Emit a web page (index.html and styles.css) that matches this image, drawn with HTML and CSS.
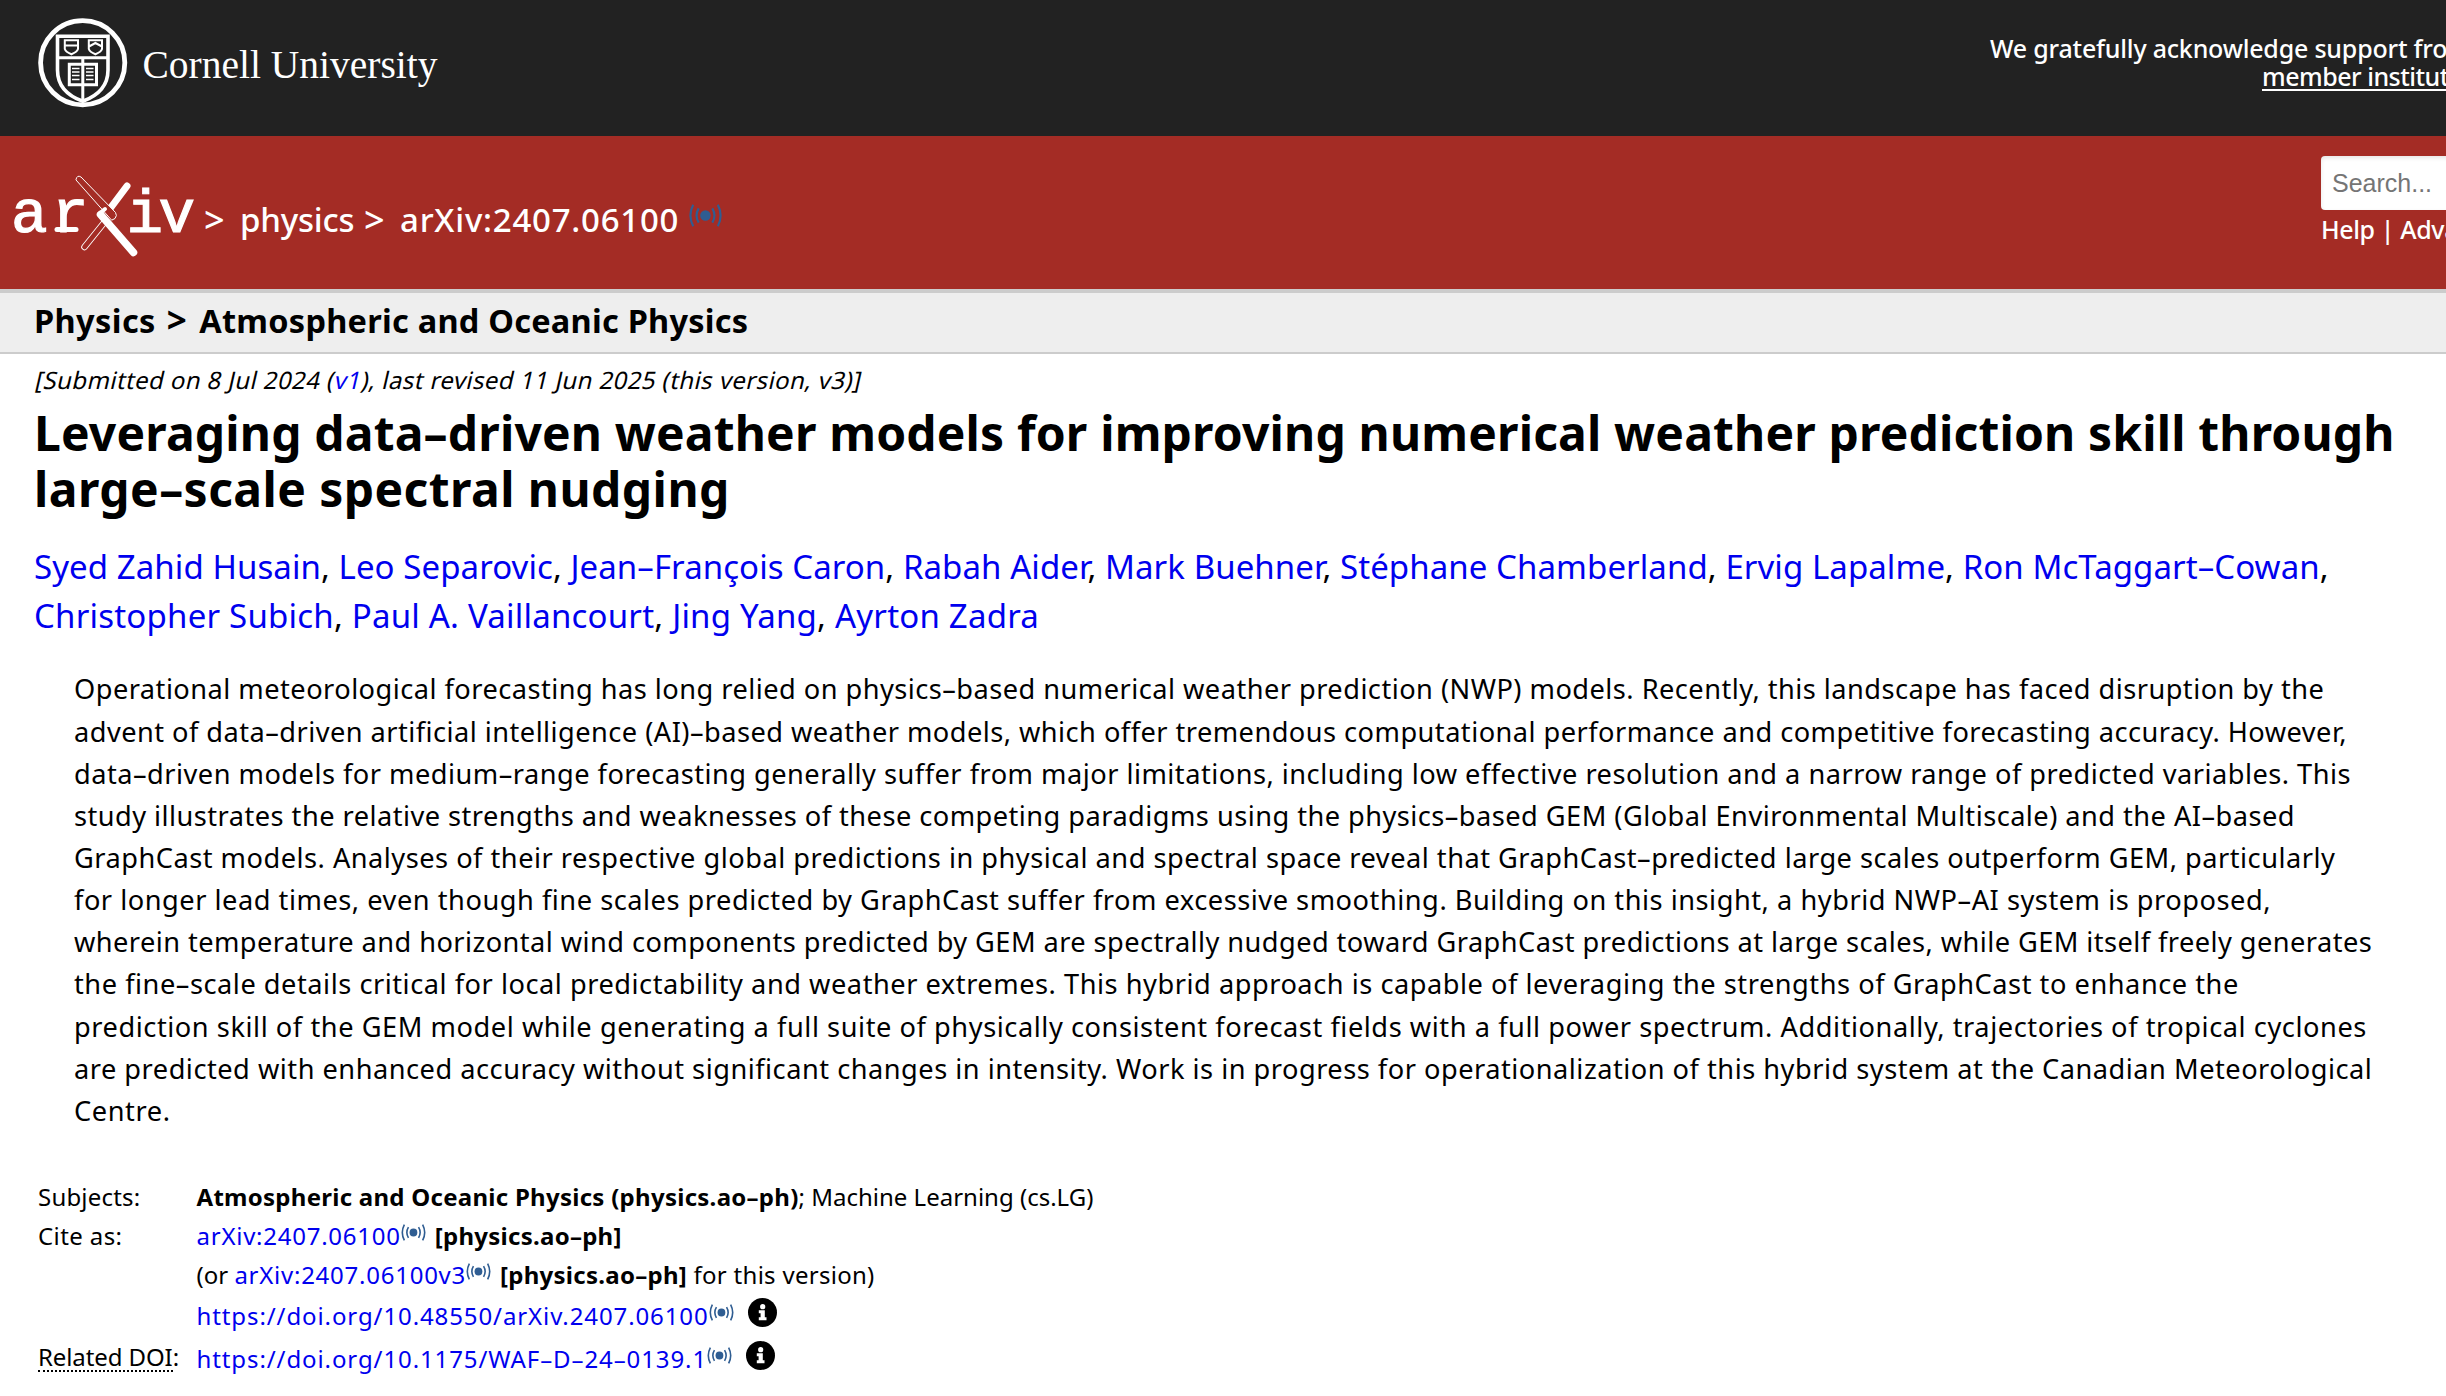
FILE: index.html
```
<!DOCTYPE html>
<html lang="en">
<head>
<meta charset="utf-8">
<title>Leveraging data-driven weather models for improving numerical weather prediction skill</title>
<link rel="stylesheet" href="styles.css">
</head>
<body>
<svg class="defs" width="0" height="0" aria-hidden="true">
  <symbol id="signal" viewBox="0 0 24.5 17">
    <circle cx="12.2" cy="8.5" r="3.9" fill="#2f5d92"/>
    <path d="M7.2 3.2Q4 8.5 7.2 13.8M17.3 3.2Q20.5 8.5 17.3 13.8M3.1 .6Q-1 8.5 3.1 16.4M21.4 .6Q25.5 8.5 21.4 16.4" fill="none" stroke="#2f5d92" stroke-width="1.6"/>
  </symbol>
  <symbol id="info" viewBox="0 0 29 29">
    <circle cx="14.5" cy="14.5" r="14.5"/>
    <circle cx="14.7" cy="8.7" r="2.6" fill="#fff"/>
    <path d="M10.8 12.3h6v7h1.700v3h-7.700v-3h1.800v-4h-1.800z" fill="#fff"/>
  </symbol>
</svg>

<header class="cornell">
  <svg class="cornell-logo" width="410" height="100" viewBox="34 14 410 100">
    <g fill="none" stroke="#fff">
      <circle cx="82.7" cy="62.8" r="42.1" stroke-width="4.8"/>
      <path d="M57.5 36.3H108V70C108 86 97 96 82.800 101.300C68 96 57.500 86 57.500 70Z" stroke-width="3.6"/>
      <path d="M57.5 57.7H108M82.8 58V100" stroke-width="3"/>
      <path d="M69.3 64.3H96.5V84.8H69.3Z" stroke-width="3"/>
      <path d="M72 68.5h7.5M72 72h7.5M72 75.5h7.5M72 79.5h7.5M86 68.5h7.5M86 72h7.5M86 75.5h7.5M86 79.5h7.5" stroke-width="1.5"/>
      <path d="M64.8 40.2H78V49Q77 52 71.4 54.3Q65.8 52 64.8 49ZM64.8 45.5H78M88.8 40.2H102V49Q101 52 95.4 54.3Q89.8 52 88.8 49ZM89 46.5L95.4 43L102 46.5" stroke-width="2"/>
    </g>
    <text class="cornell-name" x="142.5" y="77.5" textLength="295" lengthAdjust="spacingAndGlyphs">Cornell University</text>
  </svg>
  <div class="support">We gratefully acknowledge support from<a class="members">member institutions</a></div>
</header>

<div class="banner">
  <svg class="arxiv-logo" width="186" height="90" viewBox="12 168 186 90">
    <g class="logo-letters"><text x="11" y="232">a</text><text x="52" y="232">r</text><text x="126.5" y="232">i</text><text x="158.5" y="232">v</text></g>
    <path d="M57 229.600H76" stroke="#fff" stroke-width="5" stroke-linecap="round"/>
    <g fill="none" stroke-linecap="round">
      <path d="M127 186L109 210" stroke="#fff" stroke-width="7"/>
      <path d="M103 224L84.5 247" stroke="#fff" stroke-width="6.5"/>
      <path d="M103 224L84.5 247" stroke="#a42c25" stroke-width="4.7"/>
      <path d="M76 179.500Q77 174.500 81 177L115.500 212.500Q117.500 215.500 115 218.500L112 220Z" fill="#a42c25" stroke="#fff" stroke-width="1"/>
      <path d="M100.5 214.5L133.500 252.500" stroke="#fff" stroke-width="7.5"/>
      <path d="M99 214L105 209" stroke="#fff" stroke-width="4"/>
    </g>
  </svg>
  <div class="crumbs"><span class="gt">&gt;</span><span class="archive">physics</span><span class="gt">&gt;</span><span class="ident">arXiv:2407.06100</span><svg class="crumb-signal" width="33" height="23"><use href="#signal"/></svg></div>
  <div class="search">
    <div class="field">Search...</div>
    <div class="links">Help | Advanced Search</div>
  </div>
</div>

<div class="subject-bar">Physics<span class="sep">&gt;</span><span class="topic">Atmospheric and Oceanic Physics</span></div>

<main>
  <div class="dateline">[Submitted on 8 Jul 2024 (<a>v1</a>), last revised 11 Jun 2025 (this version, v3)]</div>
  <h1><span class="t1">Leveraging data–driven weather models for improving numerical weather prediction skill through</span><span class="t2">large–scale spectral nudging</span></h1>
  <div class="authors">
    <div class="au1"><a>Syed Zahid Husain</a>, <a>Leo Separovic</a>, <a>Jean–François Caron</a>, <a>Rabah Aider</a>, <a>Mark Buehner</a>, <a>Stéphane Chamberland</a>, <a>Ervig Lapalme</a>, <a>Ron McTaggart–Cowan</a>,</div>
    <div class="au2"><a>Christopher Subich</a>, <a>Paul A. Vaillancourt</a>, <a>Jing Yang</a>, <a>Ayrton Zadra</a></div>
  </div>
  <blockquote>
    <div class="l1">Operational meteorological forecasting has long relied on physics–based numerical weather prediction (NWP) models. Recently, this landscape has faced disruption by the</div>
    <div class="l2">advent of data–driven artificial intelligence (AI)–based weather models, which offer tremendous computational performance and competitive forecasting accuracy. However,</div>
    <div class="l3">data–driven models for medium–range forecasting generally suffer from major limitations, including low effective resolution and a narrow range of predicted variables. This</div>
    <div class="l4">study illustrates the relative strengths and weaknesses of these competing paradigms using the physics–based GEM (Global Environmental Multiscale) and the AI–based</div>
    <div class="l5">GraphCast models. Analyses of their respective global predictions in physical and spectral space reveal that GraphCast–predicted large scales outperform GEM, particularly</div>
    <div class="l6">for longer lead times, even though fine scales predicted by GraphCast suffer from excessive smoothing. Building on this insight, a hybrid NWP–AI system is proposed,</div>
    <div class="l7">wherein temperature and horizontal wind components predicted by GEM are spectrally nudged toward GraphCast predictions at large scales, while GEM itself freely generates</div>
    <div class="l8">the fine–scale details critical for local predictability and weather extremes. This hybrid approach is capable of leveraging the strengths of GraphCast to enhance the</div>
    <div class="l9">prediction skill of the GEM model while generating a full suite of physically consistent forecast fields with a full power spectrum. Additionally, trajectories of tropical cyclones</div>
    <div class="l10">are predicted with enhanced accuracy without significant changes in intensity. Work is in progress for operationalization of this hybrid system at the Canadian Meteorological</div>
    <div class="l11">Centre.</div>
  </blockquote>

  <div class="meta">
    <div class="row"><div class="label subj">Subjects:</div><div class="value"><b>Atmospheric and Oceanic Physics (physics.ao–ph)</b><span>; Machine Learning (cs.LG)</span></div></div>
    <div class="row"><div class="label cite">Cite as:</div><div class="value"><a class="id">arXiv:2407.06100</a><svg class="signal" width="25" height="17"><use href="#signal"/></svg><b>[physics.ao–ph]</b></div></div>
    <div class="row r3"><div class="label"></div><div class="value"><span>(or </span><a class="id">arXiv:2407.06100v3</a><svg class="signal" width="25" height="17"><use href="#signal"/></svg><b>[physics.ao–ph]</b><span class="ver"> for this version)</span></div></div>
    <div class="row r4"><div class="label"></div><div class="value"><a class="url">https://doi.org/10.48550/arXiv.2407.06100</a><svg class="signal" width="25" height="17"><use href="#signal"/></svg><svg class="info" width="29" height="29"><use href="#info"/></svg></div></div>
    <div class="row"><div class="label doi"><span>Related DOI</span>:</div><div class="value"><a class="url">https://doi.org/10.1175/WAF–D–24–0139.1</a><svg class="signal" width="25" height="17"><use href="#signal"/></svg><svg class="info" width="29" height="29"><use href="#info"/></svg></div></div>
  </div>
</main>
</body>
</html>
```
FILE: styles.css
```
* { box-sizing: border-box; }
html, body { overflow: hidden; }
body { margin: 0; background: #fff; color: #000; font-family: "Noto Sans", "Open Sans", sans-serif; white-space: nowrap; }
a { color: #0000ee; text-decoration: none; }
svg { display: block; flex: none; }
.defs { position: absolute; }

.cornell { display: flex; height: 136px; background: #222; color: #fff; padding: 14px 0 0 34px; overflow: hidden; }
.cornell-name { font-family: "Liberation Serif", serif; font-size: 41px; fill: #fff; }
.support { margin: 20px 0 0 auto; width: 456px; font-size: 25px; line-height: 28px; letter-spacing: -0.2px; font-weight: 500; }
.members { display: block; margin-left: 272px; color: #fff; letter-spacing: -0.5px; text-decoration: underline; text-underline-offset: 3px; text-decoration-thickness: 2px; }

.banner { display: flex; height: 153px; background: #a42c25; color: #fff; padding-left: 12px; overflow: hidden; }
.arxiv-logo { margin-top: 32px; }
.logo-letters { font: 61px "Liberation Mono", monospace; fill: #fff; stroke: #fff; stroke-width: 1.2px; }
.crumbs { display: flex; margin: 59px 0 0 6px; font-size: 33px; line-height: 50px; font-weight: 500; }
.gt { width: 36px; font-size: 36px; }
.archive { width: 124px; letter-spacing: -0.2px; }
.ident { letter-spacing: 0.75px; width: 289px; }
.crumb-signal { margin-top: 9px; }
.search { margin-left: auto; width: 125px; padding-top: 20px; }
.field { height: 54px; width: 300px; background: #fff; border-radius: 4px; box-shadow: inset 0 2px 4px rgba(10,10,10,.1); color: #757575; font: 25px/54px "Liberation Sans", sans-serif; padding-left: 11px; }
.links { font-size: 25px; line-height: 30px; margin-top: 4px; font-weight: 500; letter-spacing: -0.4px; }

.subject-bar { height: 65px; border-top: 4px solid #ccc; border-bottom: 2px solid #ccc; background: #eee; padding-left: 34px; font-size: 32.5px; font-weight: 700; line-height: 53px; letter-spacing: 0.4px; }
.sep { margin: 0 12px 0 11px; font-size: 35px; }
.topic { letter-spacing: 0.25px; }

.dateline { width: max-content; margin: 11px 0 0 34px; font-size: 24px; line-height: 30px; letter-spacing: 0.4px; transform: skewX(-13deg); transform-origin: 0 24px; }
h1 { margin: 9.5px 0 0 34px; font-size: 48px; line-height: 56px; font-weight: 700; }
h1 span { display: block; }
.t1 { letter-spacing: 0.16px; }
.t2 { letter-spacing: 0.43px; }
.authors { margin: 25px 0 0 34px; font-size: 33px; line-height: 49px; }
.au1 { letter-spacing: 0.075px; }
.au2 { letter-spacing: 0.21px; }
blockquote { margin: 28.9px 0 0 74px; font-size: 27.2px; line-height: 42.16px; }
.l1 { letter-spacing: 0.474px; }
.l2 { letter-spacing: 0.468px; }
.l3 { letter-spacing: 0.491px; }
.l4 { letter-spacing: 0.469px; }
.l5 { letter-spacing: 0.5px; }
.l6 { letter-spacing: 0.531px; }
.l7 { letter-spacing: 0.444px; }
.l8 { letter-spacing: 0.534px; }
.l9 { letter-spacing: 0.561px; }
.l10 { letter-spacing: 0.508px; }
.l11 { letter-spacing: 0.6px; }

.meta { margin: 49.5px 0 0 38px; font-size: 24px; line-height: 30px; }
.row { display: flex; height: 39px; }
.r3 { height: 41px; }
.r4 { height: 43px; }
.label { width: 158.5px; }
.subj { letter-spacing: 0.2px; }
.cite { letter-spacing: 0.4px; }
.doi { margin-top: -2px; letter-spacing: -0.1px; }
.doi span { display: inline-block; height: 30px; border-bottom: 2px dotted #000; }
.value { display: flex; white-space: pre; }
.value b { letter-spacing: 0.27px; }
.id { letter-spacing: 0.75px; }
.url { letter-spacing: 0.9px; }
.signal { margin: 3px 9px 0 0; }
.info { margin: -3px 0 0 5px; }
.ver { letter-spacing: 0.28px; }
```
